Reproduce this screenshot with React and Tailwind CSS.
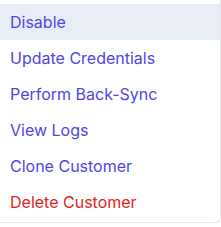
export default function App() {
  const items = [
    { label: "Disable", active: true },
    { label: "Update Credentials" },
    { label: "Perform Back-Sync" },
    { label: "View Logs" },
    { label: "Clone Customer" },
    { label: "Delete Customer", danger: true },
  ];
  return (
    <div className="w-[221px] h-[227px] bg-white" style={{ fontFamily: "Inter, sans-serif" }}>
      <div className="w-[221px] h-[223px] bg-white border-r border-b border-gray-200 rounded-br-md py-1">
        {items.map((it) => (
          <div
            key={it.label}
            className={`h-9 flex items-center pl-[10px] text-[16px] leading-6 ${it.active ? "bg-[#e9edf5]" : ""} ${it.danger ? "text-[#e02424]" : "text-[#4f46e5]"}`}
          >
            {it.label}
          </div>
        ))}
      </div>
    </div>
  );
}
